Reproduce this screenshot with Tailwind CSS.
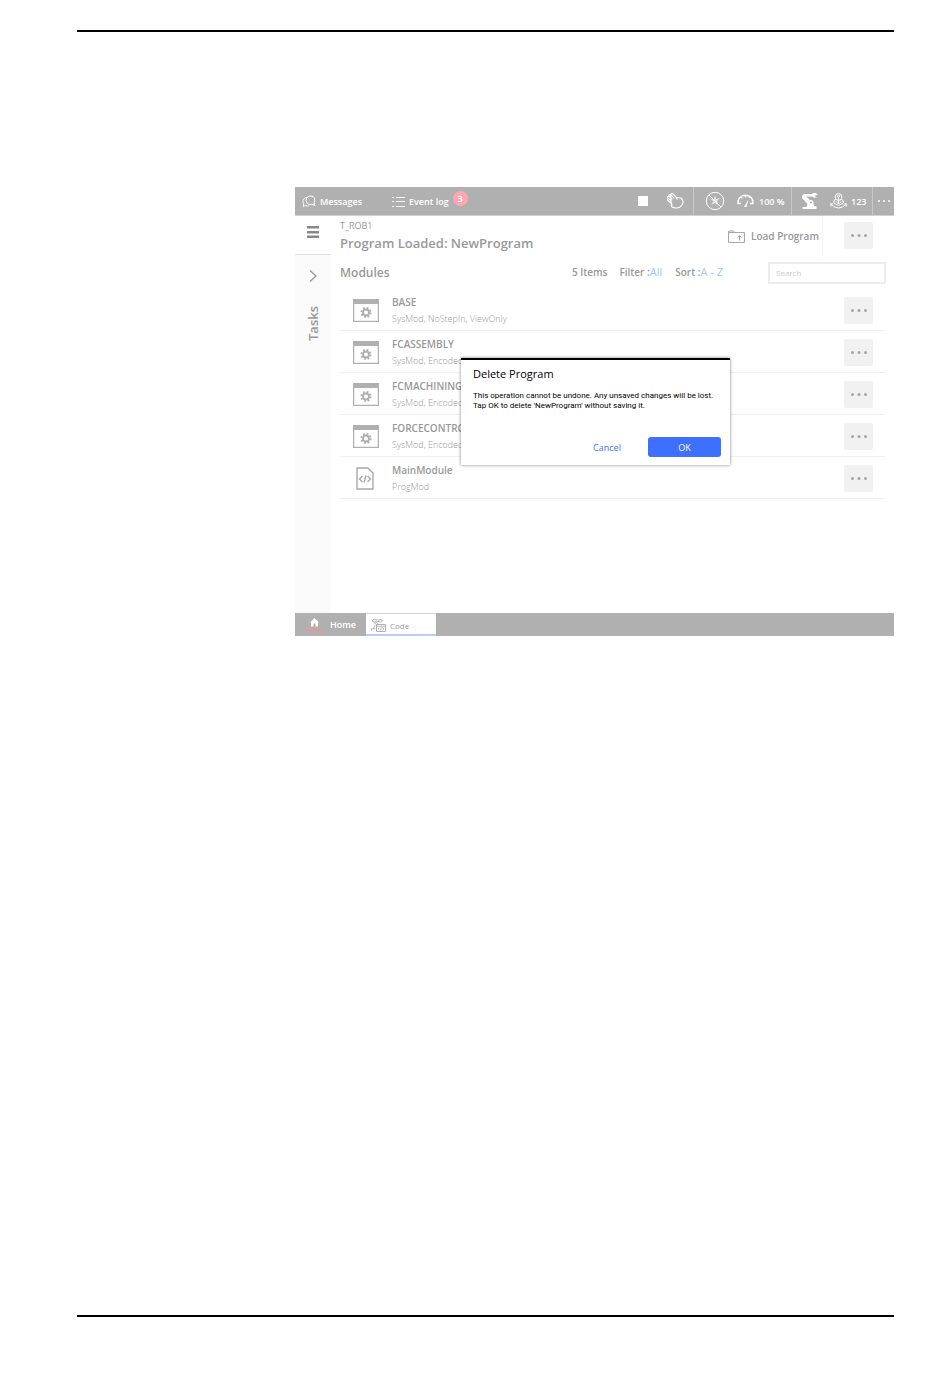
<!DOCTYPE html>
<html lang="en">
<head>
  <meta charset="UTF-8" />
  <meta name="viewport" content="width=device-width, initial-scale=1.0" />
  <title>Delete Program</title>
  <script src="https://cdn.jsdelivr.net/npm/@tailwindcss/browser@4"></script>
</head>
<body class="bg-white min-h-screen flex flex-col pl-[77px] pr-[56px] pt-[30px] pb-[61px] font-['Open_Sans','Noto_Sans',sans-serif]">

  <!-- Page rule, top -->
  <hr class="border-0 h-[2px] bg-black" />

  <main class="grow pt-[155px] pl-[218px]">
    <div class="relative text-[#999]">

      <!-- STATUS BAR -->
      <header class="h-[29px] bg-[#b0b0b0] border-b border-[#d0d0d0] text-white flex items-center text-[9px] leading-4 font-semibold">
        <button class="flex items-center gap-1 ml-[7px] w-[90px] pt-px">
          <svg class="w-[14px] h-[13px]" viewBox="0 0 14 13" fill="none" stroke="currentColor"><path d="M9 1a4 4 0 0 1 3 6.500l.8 3-3-1.200A4.300 4.300 0 1 1 9 1zM4.500 2.500C1 3 .2 6.500 1.700 8.500L1.200 11.500l2.500-1q1.500.8 3 .5"/></svg>
          Messages
        </button>
        <button class="flex items-center gap-1 pt-px">
          <svg class="w-[13px] h-[12px]" viewBox="0 0 13 12" stroke="currentColor"><path d="M0 1.500h2M4 1.500h9M0 5.500h2M4 5.500h9M0 10.500h2M4 10.500h9"/></svg>
          Event log
          <span class="size-[15px] -mt-[6px] rounded-full bg-[#ffa6b0] text-center leading-[15px]">3</span>
        </button>
        <div class="ml-auto flex items-center h-full">
          <span class="size-[10px] bg-white mr-[18px]"></span>
          <svg class="w-[18px] h-[16px] mr-[9px]" viewBox="0 0 18 16" fill="none" stroke="currentColor" stroke-width="1.100" stroke-linejoin="round" stroke-linecap="round"><path d="M5.500 13.500L6 11 2 7.500Q1 6 2.200 5.500L5 7.500M2.200 5.500Q1 3 2.800 3L6 6M2.800 3Q3 1 4.500 1.300L8 5M4.500 1.300Q6 .2 7 1l3.500 3.500L15 5q3.500 3.500 1 7-2.500 3.500-6 3-2.500 0-4.500-1.500zM10.500 4.500l.5 1.500"/></svg>
          <span class="w-px h-full bg-[#c8c8c8] mr-[11px]"></span>
          <svg class="size-[20px] mr-[12px]" viewBox="0 0 20 20" fill="none" stroke="currentColor"><circle cx="10" cy="10" r="8.700"/><path d="M4 4l12 12"/><path d="M10 4l1 4 4-1-3 3 2 5-4-3-4 2 2.500-4L5 8.500l4-.5z" fill="currentColor" fill-opacity=".7" stroke="none"/></svg>
          <svg class="w-[17px] h-[14px] mr-[5px]" viewBox="0 0 17 14" fill="none" stroke="currentColor" stroke-width="1.300"><path d="M4 9.500H1Q.5 5 4 2.500 8.500 0 13 2.500 16.500 5 16 9.500h-3M4 2.500l1.300 2M8.500 1v2.500M13 2.500l-1 1.500"/><path d="M11.500 5.500l-2 7.500H7z" fill="currentColor" stroke="none"/></svg>
          <span class="w-[32px] pt-px whitespace-nowrap">100 %</span>
          <span class="w-px h-full bg-[#c8c8c8] mr-[9px]"></span>
          <svg class="w-[17px] h-[16px] mr-[12px]" viewBox="0 0 17 16"><path d="M1 3l2-2 8 0 1-1h3l2 2-3 .3 0 1 2 1-3 .5-2-1.300L5 3.500l4 3.500a3 3 0 0 1 3.500 4l.5 2h2.500v3h-14v-2h4l1-3L1 5z" fill="currentColor"/><circle cx="10" cy="9.500" r="1.100" fill="#b0b0b0"/></svg>
          <svg class="w-[17px] h-[16px] mr-[4px]" viewBox="0 0 17 16" fill="none" stroke="currentColor"><circle cx="8.500" cy="4" r="3.400"/><circle cx="8.500" cy="3.200" r="1"/><path d="M8.500 4v7M6 8.500L8.500 11 11 8.500M5.500 6L3.800 8v2l4.700 2.500L13.200 10V8L11.500 6M.8 13.500v-3l2.500.8M16.200 13.500v-3l-2.500.8M1 11.500q7.500 7 15 0"/></svg>
          <span class="w-[21px] pt-px">123</span>
          <span class="w-px h-full bg-[#c8c8c8]"></span>
          <button class="w-[21px] flex justify-center" aria-label="More">
            <svg class="w-[12px] h-[2px]" viewBox="0 0 12 2" fill="currentColor"><circle cx="1" cy="1" r="1"/><circle cx="6" cy="1" r="1"/><circle cx="11" cy="1" r="1"/></svg>
          </button>
        </div>
      </header>

      <div class="flex min-h-[397px]">
        <!-- TASK RAIL -->
        <nav class="w-[36px] shrink-0 flex flex-col items-center">
          <button class="h-[38px] w-full flex justify-center pt-[10px]" aria-label="Menu">
            <svg class="w-[12px] h-[12px]" viewBox="0 0 12 12" fill="#888"><path d="M0 0h12v2.500H0zM0 5h12v2.500H0zM0 9.500h12V12H0z"/></svg>
          </button>
          <div class="grow w-full bg-[#fafafa] border-t border-[#e4e4e4] flex flex-col items-center pt-[15px]">
            <button aria-label="Expand tasks">
              <svg class="w-[8px] h-[12px]" viewBox="0 0 8 12" fill="none" stroke="#999" stroke-width="1.300"><path d="M1 .5l6 5.500-6 5.500"/></svg>
            </button>
            <span class="mt-[24px] text-[13px] leading-4 font-semibold [writing-mode:vertical-rl] rotate-180">Tasks</span>
          </div>
        </nav>

        <section class="grow pl-[9px] pr-[8px]">
          <div class="flex h-[41px]">
            <div class="pt-[4px]">
              <p class="text-[9px] leading-3 font-medium">T_ROB1</p>
              <h1 class="mt-px text-[13px] leading-5 font-semibold">Program Loaded: NewProgram</h1>
            </div>
            <button class="ml-auto flex items-center gap-[6px] text-[10px] font-semibold w-[95px] border-r border-[#f6f6f6] whitespace-nowrap">
              <svg class="w-[17px] h-[13px] shrink-0" viewBox="0 0 17 13" fill="none" stroke="#a8a8a8"><path d="M.5 12.500V1h5l1 1.500h10v10zM.5 2.500h6M11.500 10.500v-5M9.500 7.500l2-2 2 2"/></svg>
              Load Program
            </button>
            <button class="ml-[21px] mr-[13px] mt-[6px] w-[29px] h-[27px] rounded-[2px] bg-[#f1f1f1] flex items-center justify-center" aria-label="More">
              <svg class="w-[16px] h-[3px]" viewBox="0 0 16 3" fill="#a6a6a6"><circle cx="1.500" cy="1.500" r="1.500"/><circle cx="8" cy="1.500" r="1.500"/><circle cx="14.500" cy="1.500" r="1.500"/></svg>
            </button>
          </div>

          <div class="flex items-center h-[31px] text-[10px] font-semibold">
            <h2 class="text-[12px]">Modules</h2>
            <span class="ml-auto">5 Items</span>
            <span class="ml-[12px]">Filter :<a href="#" class="text-[11px] font-normal text-[#99ccfb]">All</a></span>
            <span class="ml-[13px] mr-[45px]">Sort :<a href="#" class="text-[11px] font-normal text-[#99ccfb]">A - Z</a></span>
            <input type="text" placeholder="Search" aria-label="Search" class="w-[118px] h-[22px] px-[6px] border-2 border-[#ededed] text-[8px] font-normal placeholder:text-[#ccc]" />
          </div>

          <ul id="moduleList" class="mr-px pt-px"></ul>
        </section>
      </div>

      <!-- TASK BAR -->
      <footer class="h-[23px] bg-[#b0b0b0] flex text-[9px]">
        <button class="w-[71px] flex items-center text-white font-semibold pl-[12px] pt-px gap-[8px]">
          <svg class="w-[15px] h-[14px]" viewBox="0 0 15 14"><path d="M7.500 0L12 4.500h-1V8.500H8.500V5.500h-2v3H4V4.500H3z" fill="#fff"/><path d="M0 11.500h15V13H0z" fill="#ff8a8a"/></svg>
          Home
        </button>
        <button class="w-[70px] bg-white border-t border-[#d0d0d0] border-b-2 border-b-[#b9cffb] flex items-center pl-[5px] pt-[3px] gap-[4px] text-[8px]">
          <svg class="w-[15px] h-[13px]" viewBox="0 0 15 13" fill="none" stroke="#a8a8a8" stroke-width=".9"><path d="M1 2l1.500-1.300 5 .3 2-.5 2 1-2 1.500-2-.5-4 .5zM2.500 3l3 2.500M4.500 2.800l3 2.500M.5 11.500V9.800h4M2.500 9.500l1.500-3M5.500 5.500h9v7h-9zM5.500 7.200h9M8.500 8.700L7.200 10l1.300 1.200M11.500 8.700l1.300 1.300-1.300 1.200M10.300 8.500l-.6 3"/></svg>
          Code
        </button>
      </footer>

      <!-- DELETE DIALOG -->
      <div role="dialog" aria-labelledby="dialogTitle" class="absolute left-[166px] top-[171px] w-[269px] h-[107px] bg-white border-t-2 border-black shadow-[0_0_3px_rgba(0,0,0,0.5)] text-black flex flex-col pt-[6px] pl-[12px] pr-[9px] pb-[8px]">
        <h2 id="dialogTitle" class="text-[11px] leading-4">Delete Program</h2>
        <p class="mt-[9px] font-[Roboto,sans-serif] text-[8px] leading-[10px] whitespace-nowrap">This operation cannot be undone. Any unsaved changes will be lost.<br />Tap OK to delete 'NewProgram' without saving it.</p>
        <div class="mt-auto flex justify-end text-[9px]">
          <button class="w-[82px] pt-px text-[#3d70ff]">Cancel</button>
          <button class="w-[73px] h-[20px] pt-px rounded-[3px] bg-[#3d70ff] text-white">OK</button>
        </div>
      </div>
    </div>
  </main>

  <!-- Page rule, bottom -->
  <hr class="border-0 h-[2px] bg-black" />

  <!-- Module icons -->
  <template id="systemIcon">
    <svg class="w-[26px] h-[23px]" viewBox="0 0 26 23" fill="none" stroke="#b0b0b0"><path d="M.5.5h25v22H.5z" stroke-width="1.500"/><path d="M0 0h26v5H0z" fill="#b0b0b0" stroke="none"/><circle cx="13" cy="13.500" r="3" stroke-width="1.900"/><circle cx="13" cy="13.500" r="4.600" stroke-width="2" stroke-dasharray="1.800 1.813"/></svg>
  </template>
  <template id="programIcon">
    <svg class="w-[18px] h-[23px] mr-[2px]" viewBox="0 0 18 23" fill="none" stroke="#a8a8a8" stroke-width="1.400"><path d="M1 1h11l5 5v16H1z"/><path d="M6.500 9L3.500 12l3 3M11.500 9l3 3-3 3M10 8.500l-2 7"/></svg>
  </template>

  <script>
    const modules = [
      ["BASE", "SysMod, NoStepIn, ViewOnly", "systemIcon"],
      ["FCASSEMBLY", "SysMod, Encoded", "systemIcon"],
      ["FCMACHINING", "SysMod, Encoded", "systemIcon"],
      ["FORCECONTROL", "SysMod, Encoded", "systemIcon"],
      ["MainModule", "ProgMod", "programIcon"]
    ];

    document.getElementById("moduleList").innerHTML = modules.map(([name, info, icon]) => `
      <li class="h-[42px] pt-[2px] flex items-center border-b border-[#f0f0f0]">
        <span class="w-[52px] flex justify-center">${document.getElementById(icon).innerHTML}</span>
        <div>
          <p class="text-[10px] leading-4 font-semibold">${name}</p>
          <p class="text-[9px] leading-[17px] font-light">${info}</p>
        </div>
        <button class="ml-auto mr-[12px] w-[29px] h-[27px] rounded-[2px] bg-[#f1f1f1] flex items-center justify-center" aria-label="More">
          <svg class="w-[16px] h-[3px]" viewBox="0 0 16 3" fill="#a6a6a6"><circle cx="1.500" cy="1.500" r="1.500"/><circle cx="8" cy="1.500" r="1.500"/><circle cx="14.500" cy="1.500" r="1.500"/></svg>
        </button>
      </li>`).join("");
  </script>
</body>
</html>
